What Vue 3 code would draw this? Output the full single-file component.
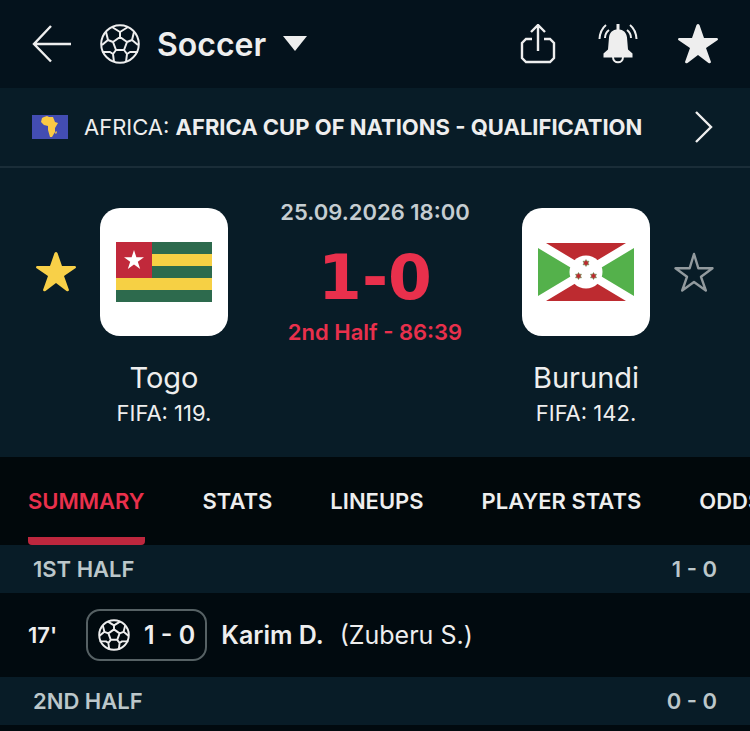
<template>
  <main class="match-page">
    <header class="top-bar">
      <button class="icon-button" type="button" aria-label="Back">
        <svg width="40" height="40" viewBox="0 0 40 40" fill="none" stroke="currentColor" stroke-width="2.4">
          <path d="M39 20H2M19 2 2 20l17 17.500" />
        </svg>
      </button>
      <button class="sport-button" type="button">
        <svg class="sport-ball" viewBox="0 0 40 40" fill="none" stroke="currentColor" stroke-width="2" stroke-linejoin="round">
          <circle cx="20" cy="20" r="18.800" />
          <path :d="ballPath" />
        </svg>
        <span>Soccer</span>
        <svg width="24" height="16" viewBox="0 0 24 16" fill="currentColor">
          <path d="M0 0h24L12 15z" />
        </svg>
      </button>
      <div class="actions">
        <button class="icon-button" type="button" aria-label="Share">
          <svg width="40" height="40" viewBox="0 0 40 40" fill="none" stroke="currentColor" stroke-width="2.400">
            <path d="M14 15H8l-4 4v15l4 4h24l4-4V19l-4-4h-6M20 27V2M13 8l7-7 7 7" />
          </svg>
        </button>
        <button class="icon-button" type="button" aria-label="Notifications">
          <svg width="40" height="40" viewBox="0 0 40 40">
            <path d="M18.500 0h3v5.500c4 .5 7 3 7.500 8l1 12 4.500 4v4h-29v-4l4.500-4 1-12c.5-5 3.500-7.500 7.500-8z" fill="currentColor" />
            <path d="M15 33c0 7 10 7 10 0M8 1Q2 6 1.500 15M11 6q-4 3-4 8M32 1q6 5 6.500 14M29 6q4 3 4 8" fill="none" stroke="currentColor" stroke-width="2" />
          </svg>
        </button>
        <button class="icon-button" type="button" aria-label="Add match to favorites">
          <svg width="40" height="40" viewBox="0 0 40 40" fill="currentColor">
            <path :d="starPath" />
          </svg>
        </button>
      </div>
    </header>

    <a class="league" href="#">
      <svg class="league-flag" viewBox="0 0 36 24">
        <path d="M0 0h36v24H0z" fill="#434db2" />
        <path d="m12 2 3-1 2 1 4 0 2 5 3 1-3 5v4l-3 5h-2l-2-7v-4l-4-1-3-3 1-4z" fill="#fbca44" />
        <path d="m24 16 1 1-1 2-1-1z" fill="#fbca44" />
      </svg>
      <span class="league-name">AFRICA: <strong>AFRICA CUP OF NATIONS - QUALIFICATION</strong></span>
      <svg class="chevron" width="20" height="34" viewBox="0 0 20 34" fill="none" stroke="currentColor" stroke-width="2.400">
        <path d="m2 2 15 15L2 32" />
      </svg>
    </a>

    <section class="match">
      <button class="favorite active" type="button" aria-label="Togo is a favorite">
        <svg width="40" height="40" viewBox="0 0 40 40" fill="currentColor"><path :d="starPath" /></svg>
      </button>
      <div class="team">
        <div class="team-logo">
          <svg width="96" height="60" viewBox="0 0 96 60">
            <path d="M0 0h96v60H0z" fill="#2d6a4d" />
            <path d="M0 12h96v12H0zM0 36h96v12H0z" fill="#f6d044" />
            <path d="M0 0h36v36H0z" fill="#c1293b" />
            <path d="m18 8 2.400 7.300H28l-6.200 4.500 2.400 7.300-6.200-4.500-6.200 4.500 2.400-7.300L8 15.300h7.600z" fill="#fff" />
          </svg>
        </div>
        <h2>Togo</h2>
        <p>FIFA: 119.</p>
      </div>
      <div class="result">
        <time datetime="2026-09-25T18:00">25.09.2026 18:00</time>
        <div class="score">1-0</div>
        <div class="stage">2nd Half - 86:39</div>
      </div>
      <div class="team">
        <div class="team-logo">
          <svg width="96" height="58" viewBox="0 0 96 58">
            <path d="M0 0h96v58H0z" fill="#fff" />
            <path d="M8 0h80L48 24zM8 58h80L48 34z" fill="#bd2b30" />
            <path d="M0 5v48l40-24zM96 5v48L56 29z" fill="#54b14b" />
            <circle cx="48" cy="29" r="16.500" fill="#fff" />
            <g fill="#bd2b30" stroke="#54914b" stroke-width=".5">
              <path v-for="p in burundiStars" :key="p" :transform="p" d="m0-3.500 1 1.700h2L2 0l1 1.800H1L0 3.500l-1-1.700h-2L-2 0l-1-1.800h2z" />
            </g>
          </svg>
        </div>
        <h2>Burundi</h2>
        <p>FIFA: 142.</p>
      </div>
      <button class="favorite" type="button" aria-label="Add Burundi to favorites">
        <svg width="40" height="40" viewBox="0 0 40 40" fill="none" stroke="currentColor" stroke-width="2.400" stroke-linejoin="round">
          <path d="m20 2 4.300 14.200H38.500L27 24.800l4.800 13.700L20 30 8.200 38.500 13 24.800 1.500 16.200h14.200z" />
        </svg>
      </button>
    </section>

    <nav class="tabs">
      <a v-for="tab in tabs" :key="tab" href="#" :class="{ active: tab === 'SUMMARY' }">{{ tab }}</a>
    </nav>

    <section>
      <div class="period"><h3>1ST HALF</h3><span>1 - 0</span></div>
      <div class="incident">
        <span class="minute">17'</span>
        <div class="goal">
          <svg class="goal-ball" viewBox="0 0 40 40" fill="none" stroke="currentColor" stroke-width="2.400" stroke-linejoin="round">
            <circle cx="20" cy="20" r="18.500" />
            <path :d="ballPath" />
          </svg>
          <span>1 - 0</span>
        </div>
        <strong>Karim D.</strong>
        <span class="assist">(Zuberu S.)</span>
      </div>
      <div class="period"><h3>2ND HALF</h3><span>0 - 0</span></div>
    </section>
  </main>
</template>

<script setup>
const tabs = ['SUMMARY', 'STATS', 'LINEUPS', 'PLAYER STATS', 'ODDS']

const starPath = 'M18.500 1q1.500-2 3 0L26 14h13q2 1 0 2.500L28 24l5 14q-.5 2-2.500 1L20 31 9.500 39q-2 1-2.500-1l5-14L1 16.500q-2-1.500 0-2.500h13z'

const ballPath = 'M20 13l7 5-3 8h-8l-3-8zM20 13V8M27 18l5-2M24 26l3 4M16 26l-3 4M13 18l-5-2M12 3l8 5 8-5M34 8l-2 8 6 5M38 28l-8 0-3 2-1 8M14 38l-1-8-3-2-8 0M2 21l6-5-2-8'

const burundiStars = ['translate(48 20)', 'translate(40.500 33)', 'translate(55.500 33)']
</script>

<style scoped>
.match-page {
  min-height: 100vh;
  overflow: hidden;
  background: #010a0f;
  color: #eee;
  font-family: Inter, "Liberation Sans", sans-serif;
  font-size: 22px;
}

button {
  padding: 0;
  border: 0;
  background: none;
  color: inherit;
  font: inherit;
  cursor: pointer;
}

a {
  color: inherit;
  text-decoration: none;
}

svg {
  display: block;
  flex-shrink: 0;
}

.top-bar {
  display: flex;
  align-items: center;
  gap: 28px;
  height: 88px;
  padding: 0 32px;
  background: #04121c;
}

.sport-button {
  display: flex;
  align-items: center;
  gap: 17px;
  font-size: 32px;
  font-weight: 600;
}

.sport-ball {
  width: 40px;
  height: 40px;
}

.actions {
  display: flex;
  gap: 40px;
  margin-left: auto;
}

.league {
  display: flex;
  align-items: center;
  height: 78px;
  padding: 0 36px 0 32px;
  border-bottom: 2px solid #1a2d38;
  background: #081c27;
}

.league-flag {
  width: 36px;
  height: 24px;
  margin-right: 16px;
}

.league-name {
  flex: 1;
  min-width: 0;
  overflow: hidden;
  text-overflow: ellipsis;
  white-space: nowrap;
}

.league-name strong {
  font-weight: 700;
}

.chevron {
  margin-left: 32px;
}

.match {
  display: flex;
  align-items: flex-start;
  height: 249px;
  padding: 40px 36px 0;
  background: #081c27;
}

.favorite {
  margin-top: 44px;
  color: #929a9e;
}

.favorite.active {
  color: #f8d048;
}

.team {
  display: flex;
  flex-direction: column;
  align-items: center;
  width: 128px;
  margin: 0 24px;
}

.team-logo {
  display: flex;
  align-items: center;
  justify-content: center;
  width: 128px;
  height: 128px;
  border-radius: 20px;
  background: #fff;
}

.team h2 {
  margin: 22px 0 0;
  font-size: 29px;
  font-weight: 400;
  line-height: 40px;
}

.team p {
  margin: 0;
  line-height: 30px;
}

.result {
  flex: 1;
  text-align: center;
  white-space: nowrap;
  font-weight: 600;
  color: #e9304c;
}

.result time {
  display: block;
  margin-top: -10px;
  line-height: 28px;
  color: #c5cdd1;
}

.score {
  margin-top: 16px;
  font-family: "DejaVu Sans", sans-serif;
  font-size: 63px;
  font-weight: 700;
  line-height: 72px;
}

.stage {
  margin-top: 4px;
  line-height: 28px;
}

.tabs {
  display: flex;
  gap: 58px;
  height: 88px;
  padding-left: 28px;
  overflow: hidden;
  background: #01080b;
  font-weight: 600;
  line-height: 88px;
  white-space: nowrap;
}

.tabs a.active {
  border-bottom: 8px solid #bd273e;
  border-radius: 4px;
  color: #e9304c;
}

.period {
  display: flex;
  align-items: center;
  justify-content: space-between;
  height: 48px;
  padding: 0 33px;
  background: #081c27;
  color: #bcc7ca;
  font-weight: 600;
}

.period h3 {
  margin: 0;
  font-size: 22px;
  font-weight: 600;
}

.incident {
  display: flex;
  align-items: center;
  height: 84px;
  padding: 0 28px;
  font-size: 25px;
}

.minute {
  width: 58px;
  font-size: 22px;
  font-weight: 600;
}

.goal {
  display: flex;
  align-items: center;
  gap: 14px;
  box-sizing: border-box;
  height: 52px;
  margin-right: 14px;
  padding: 0 10px;
  border: 2px solid #566164;
  border-radius: 14px;
  font-weight: 600;
}

.goal-ball {
  width: 32px;
  height: 32px;
}

.incident strong {
  font-weight: 600;
}

.assist {
  margin-left: 16px;
}
</style>

<style>
body {
  margin: 0;
  background: #010a0f;
}
</style>
